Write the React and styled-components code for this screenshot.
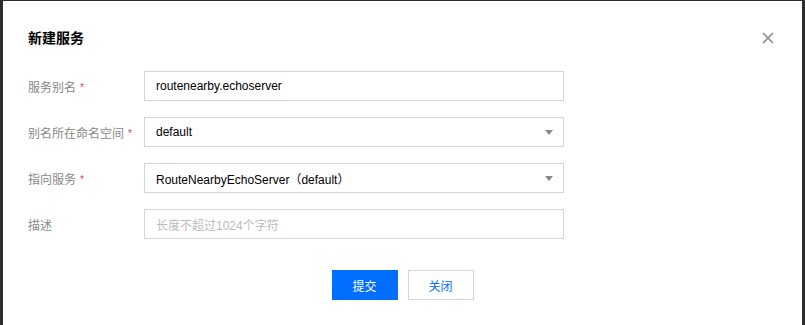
import styled, { createGlobalStyle } from "styled-components";

const GlobalStyle = createGlobalStyle`
  html, body {
    margin: 0;
    padding: 0;
    background: #2d2d2d;
  }
  * {
    box-sizing: border-box;
  }
`;

const fields = [
  { label: "服务别名", required: true, value: "routenearby.echoserver" },
  { label: "别名所在命名空间", required: true, value: "default", select: true },
  { label: "指向服务", required: true, value: "RouteNearbyEchoServer（default）", select: true },
  { label: "描述", placeholder: "长度不超过1024个字符" },
];

const App = () => {
  return (
    <>
      <GlobalStyle />
      <Modal>
        <Header>
          <Title>新建服务</Title>
          <CloseButton aria-label="关闭">
            <svg width="12" height="12" viewBox="0 0 12 12">
              <path d="M1 1L11 11M11 1L1 11" stroke="#888" strokeWidth="1.6" fill="none" />
            </svg>
          </CloseButton>
        </Header>
        <Form>
          {fields.map((f) => (
            <Row key={f.label}>
              <Label>
                {f.label}
                {f.required && <Required>*</Required>}
              </Label>
              <Field>
                {f.value ? <Value>{f.value}</Value> : <Placeholder>{f.placeholder}</Placeholder>}
                {f.select && <Caret />}
              </Field>
            </Row>
          ))}
        </Form>
        <Footer>
          <Button primary>提交</Button>
          <Button>关闭</Button>
        </Footer>
      </Modal>
    </>
  );
};

const Modal = styled.div`
  margin: 1px 3px 0 3px;
  height: 324px;
  background: #fff;
  font-family: "Liberation Sans", "Noto Sans CJK SC", sans-serif;
  font-size: 12px;
  color: #000;
`;

const Header = styled.div`
  display: flex;
  align-items: center;
  justify-content: space-between;
  padding: 27px 28px 0 25px;
  height: 47px;
`;

const Title = styled.h2`
  margin: 0;
  font-size: 14px;
  font-weight: bold;
  line-height: 20px;
`;

const CloseButton = styled.div`
  display: flex;
  width: 12px;
  height: 12px;
`;

const Form = styled.div`
  display: flex;
  flex-direction: column;
  gap: 16px;
  padding: 23px 0 0 25px;
`;

const Row = styled.div`
  display: flex;
  align-items: center;
  height: 30px;
`;

const Label = styled.div`
  width: 116px;
  color: #888;
  display: flex;
  align-items: center;
`;

const Required = styled.span`
  color: #e54545;
  margin-left: 4px;
  font-size: 10px;
  line-height: 1;
  position: relative;
  top: 2px;
`;

const Field = styled.div`
  width: 420px;
  height: 30px;
  border: 1px solid #cfd5de;
  display: flex;
  align-items: center;
  justify-content: space-between;
  padding: 0 10px 0 11px;
`;

const Value = styled.span`
  color: #000;
`;

const Placeholder = styled.span`
  color: #bbb;
`;

const Caret = styled.span`
  width: 0;
  height: 0;
  border-left: 4.5px solid transparent;
  border-right: 4.5px solid transparent;
  border-top: 5px solid #888;
`;

const Footer = styled.div`
  display: flex;
  justify-content: center;
  gap: 10px;
  padding-top: 31px;
`;

const Button = styled.div`
  width: 66px;
  height: 30px;
  display: flex;
  align-items: center;
  justify-content: center;
  background: ${(p) => (p.primary ? "#006eff" : "#fff")};
  color: ${(p) => (p.primary ? "#fff" : "#006eff")};
  border: 1px solid ${(p) => (p.primary ? "#006eff" : "#cfd5de")};
`;

export default App;
